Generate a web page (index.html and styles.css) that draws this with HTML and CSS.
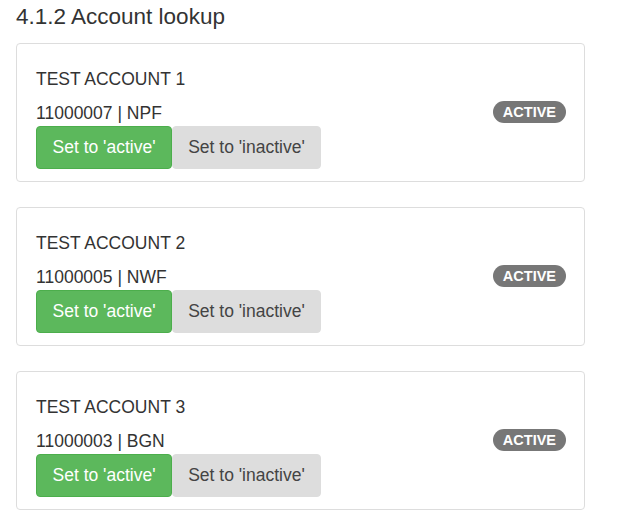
FILE: index.html
```html
<!DOCTYPE html>
<html lang="en">
<head>
<meta charset="utf-8">
<title>Account lookup</title>
<link rel="stylesheet" href="styles.css">
</head>
<body>
<div class="page">
  <h3 class="heading">4.1.2 Account lookup</h3>

  <div class="card">
    <div class="card-title">TEST ACCOUNT 1</div>
    <div class="card-row">
      <span class="card-id">11000007 | NPF</span>
      <span class="badge">ACTIVE</span>
    </div>
    <div class="btn-group">
      <button class="btn btn-success">Set to 'active'</button>
      <button class="btn btn-default">Set to 'inactive'</button>
    </div>
  </div>

  <div class="card">
    <div class="card-title">TEST ACCOUNT 2</div>
    <div class="card-row">
      <span class="card-id">11000005 | NWF</span>
      <span class="badge">ACTIVE</span>
    </div>
    <div class="btn-group">
      <button class="btn btn-success">Set to 'active'</button>
      <button class="btn btn-default">Set to 'inactive'</button>
    </div>
  </div>

  <div class="card">
    <div class="card-title">TEST ACCOUNT 3</div>
    <div class="card-row">
      <span class="card-id">11000003 | BGN</span>
      <span class="badge">ACTIVE</span>
    </div>
    <div class="btn-group">
      <button class="btn btn-success">Set to 'active'</button>
      <button class="btn btn-default">Set to 'inactive'</button>
    </div>
  </div>
</div>
</body>
</html>
```

FILE: styles.css
```css
html, body {
  margin: 0;
  padding: 0;
  background: #fff;
}

body {
  font-family: "Liberation Sans", Arial, Helvetica, sans-serif;
  color: #333;
  font-size: 17.5px;
}

.page {
  padding: 4px 16px 20px 16px;
  width: 569px;
}

.heading {
  margin: 0 0 13px 0;
  font-size: 22.5px;
  font-weight: normal;
  line-height: 26px;
  color: #333;
}

.card {
  border: 1px solid #ddd;
  border-radius: 4px;
  padding: 23px 18px 12px 19px;
  margin-bottom: 25px;
}

.card-title {
  font-size: 17.5px;
  line-height: 24px;
  margin-bottom: 10px;
}

.card-row {
  display: flex;
  justify-content: space-between;
  align-items: flex-start;
  line-height: 24px;
  margin-bottom: 1px;
}

.card-id {
  font-size: 17.5px;
}

.badge {
  background: #777;
  color: #fff;
  font-weight: bold;
  font-size: 14.5px;
  line-height: 22px;
  height: 22px;
  padding: 0 10px;
  border-radius: 11px;
}

.btn-group {
  display: flex;
}

.btn {
  font-family: "Liberation Sans", Arial, Helvetica, sans-serif;
  font-size: 17.5px;
  height: 43px;
  line-height: 41px;
  border-radius: 4px;
  border: 1px solid transparent;
  margin: 0;
  padding: 0;
  white-space: nowrap;
  text-align: center;
  cursor: pointer;
}

.btn-success {
  background: #5cb85c;
  border-color: #4cae4c;
  color: #fff;
  width: 136px;
}

.btn-default {
  background: #ddd;
  border-color: #ddd;
  color: #444;
  width: 149px;
}
```
